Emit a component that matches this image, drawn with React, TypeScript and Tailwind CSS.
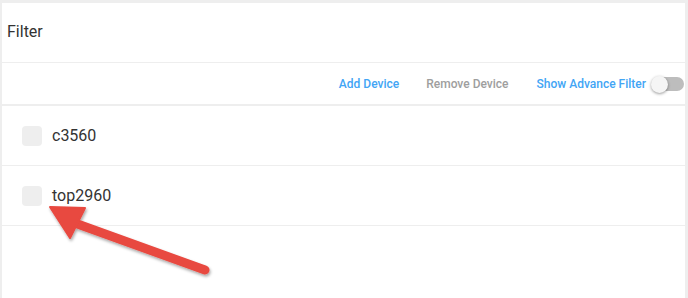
import React from "react";

const devices = ["c3560", "top2960"];

const App: React.FC = () => {
  return (
    <div
      className="relative w-[688px] h-[298px] bg-[#eeeeee] pt-[3px] pl-[2px] pr-[3px] overflow-hidden"
      style={{ fontFamily: "Roboto, 'Liberation Sans', sans-serif" }}
    >
      <div className="bg-white h-full flex flex-col">
        {/* Header */}
        <div className="h-[60px] border-b border-[#eeeeee] flex items-center pl-[5px] pb-[2px]">
          <span className="text-[16px] text-[#333333]">Filter</span>
        </div>

        {/* Toolbar */}
        <div className="h-[43px] border-b-2 border-[#eeeeee] flex items-center justify-end gap-[27px] pr-[1px] pt-[1px]">
          <button className="text-[12px] font-medium text-[#42a5f5]">Add Device</button>
          <button className="text-[12px] font-medium text-[#9e9e9e] mr-[1px]">Remove Device</button>
          <div className="flex items-center gap-[5px]">
            <button className="text-[12px] font-medium text-[#42a5f5]">Show Advance Filter</button>
            <div className="relative w-[33px] h-[18px] flex items-center">
              <div className="absolute left-[3px] right-0 h-[14px] rounded-full bg-[#bdbdbd]"></div>
              <div className="absolute left-0 w-[17px] h-[17px] rounded-full bg-[#f5f5f5] shadow-[0_1px_3px_rgba(0,0,0,0.4)]"></div>
            </div>
          </div>
        </div>

        {/* Device rows */}
        {devices.map((d) => (
          <div key={d} className="h-[60px] border-b border-[#eeeeee] flex items-center gap-[10px] pl-[20px] pt-[1px]">
            <div className="w-[20px] h-[20px] rounded-[4px] bg-[#eeeeee]"></div>
            <span className="text-[16px] text-[#333333]">{d}</span>
          </div>
        ))}
      </div>

      {/* Annotation arrow */}
      <svg className="absolute left-0 top-0 pointer-events-none" width="688" height="298">
        <defs>
          <filter id="sh" x="-20%" y="-20%" width="140%" height="140%">
            <feDropShadow dx="1" dy="2" stdDeviation="1.5" floodColor="#000" floodOpacity="0.35" />
          </filter>
        </defs>
        <g filter="url(#sh)" fill="#e8483f" stroke="#e8483f">
          <line x1="205" y1="270" x2="72" y2="222" strokeWidth="9" strokeLinecap="round" />
          <polygon points="50,207 85,208 70,238" strokeWidth="2" strokeLinejoin="round" />
        </g>
      </svg>
    </div>
  );
};

export default App;
